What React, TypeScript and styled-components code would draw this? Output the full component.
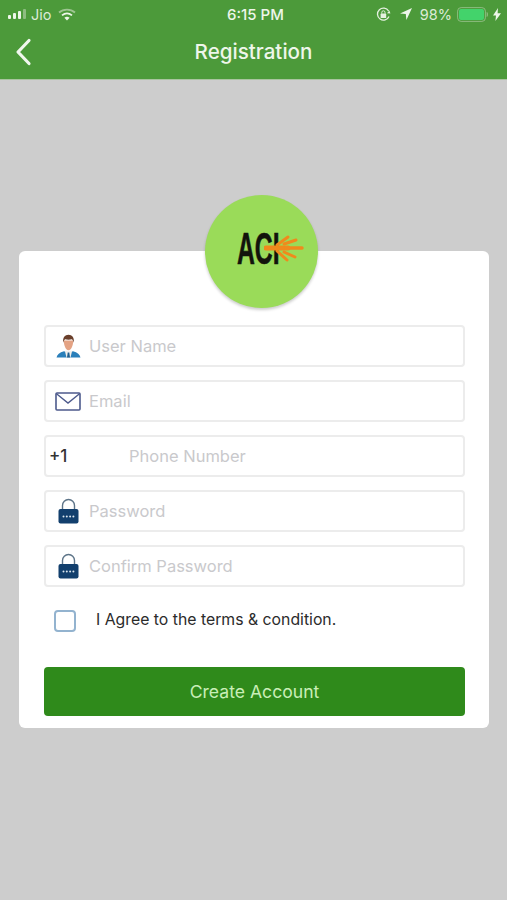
import { FC } from 'react';
import styled, { createGlobalStyle } from 'styled-components';

const GlobalStyle = createGlobalStyle`
  html, body {
    margin: 0;
    padding: 0;
    background: #cdcdcd;
    font-family: Inter, "Liberation Sans", sans-serif;
  }
  * { box-sizing: border-box; }
`;

const Screen = styled.div`
  width: 507px;
  height: 900px;
  background: #cdcdcd;
  overflow: hidden;
`;

const Header = styled.header`
  height: 80px;
  background: #4c9a3a;
  border-bottom: 1px solid #a9c49f;
  color: #eef6ea;
`;

const StatusBar = styled.div`
  height: 28px;
  padding: 0 6px 0 8px;
  display: grid;
  grid-template-columns: 1fr auto 1fr;
  align-items: center;
  font-size: 14.5px;
  color: #dcebd6;
`;

const StatusLeft = styled.div`
  display: flex;
  align-items: center;
  gap: 3px;
`;

const StatusRight = styled.div`
  display: flex;
  align-items: center;
  justify-content: flex-end;
  gap: 5px;
`;

const Time = styled.span`
  margin-left: 2px;
  font-size: 15px;
  font-weight: 500;
  color: #eef6ea;
`;

const NavBar = styled.div`
  height: 51px;
  display: grid;
  grid-template-columns: 1fr auto 1fr;
  align-items: center;
  padding: 0 14px;
  margin-top: -2px;
`;

const Title = styled.h1`
  margin: 0;
  font-size: 20.6px;
  font-weight: 500;
  color: #eef6ea;
`;

const Main = styled.main`
  padding: 171px 18px 0 19px;
`;

const Card = styled.section`
  position: relative;
  background: #fff;
  border-radius: 6px;
  padding: 74px 24px 12px 25px;
`;

const LogoBadge = styled.div`
  position: absolute;
  top: -56px;
  left: 186px;
  width: 113px;
  height: 113px;
  border-radius: 50%;
  background: #9adb59;
  box-shadow: 0 2px 3px rgba(0, 0, 0, 0.2);
  display: flex;
  align-items: center;
  padding: 0 0 7px 32px;
`;

const LogoText = styled.span`
  font-family: "Liberation Sans", sans-serif;
  font-weight: 700;
  font-size: 45px;
  color: #12140c;
  display: inline-block;
  transform: scaleX(0.55);
  transform-origin: left center;
  line-height: 1;
  -webkit-text-stroke: 0.6px #12140c;
`;

const Sparks = styled.svg`
  position: absolute;
  left: 59px;
  top: 34px;
`;

const Fields = styled.div`
  display: flex;
  flex-direction: column;
  gap: 13px;
`;

const Field = styled.div`
  height: 42px;
  border: 2px solid #ececec;
  border-radius: 4px;
  display: flex;
  align-items: center;
  background: #fff;
`;

const IconSlot = styled.span`
  width: 43px;
  flex: none;
  display: flex;
  align-items: center;
  justify-content: center;
  padding-left: 1px;
`;

const Placeholder = styled.span`
  font-size: 16.5px;
  color: #c9c9cc;
`;

const DialCode = styled.span`
  width: 83px;
  flex: none;
  padding-left: 3px;
  font-size: 17px;
  font-weight: 500;
  color: #333;
`;

const AgreeRow = styled.label`
  display: flex;
  align-items: center;
  height: 22px;
  margin-top: 23px;
  padding-left: 10px;
  gap: 20px;
  font-size: 15.8px;
  color: #2b2b2b;
`;

const AgreeText = styled.span`
  margin-top: -3px;
`;

const CheckBox = styled.span`
  width: 22px;
  height: 22px;
  border: 2px solid #93b3cf;
  border-radius: 4px;
  background: #fff;
  flex: none;
`;

const SubmitButton = styled.button`
  display: block;
  width: 100%;
  height: 49px;
  margin-top: 35px;
  border: none;
  border-radius: 4px;
  background: #2f8a1b;
  color: #c9eeb8;
  font-family: inherit;
  font-size: 17.6px;
  font-weight: 400;
`;

const SignalIcon: FC = () => (
  <svg width="20" height="12" viewBox="0 0 20 12">
    <rect x="0" y="7" width="3" height="4" rx="1" fill="#eef6ea" />
    <rect x="5" y="5" width="3" height="6" rx="1" fill="#eef6ea" />
    <rect x="10" y="3" width="3" height="8" rx="1" fill="#eef6ea" />
    <rect x="15" y="1" width="3" height="10" rx="1" fill="#8dbc80" />
  </svg>
);

const WifiIcon: FC = () => (
  <svg width="18" height="13" viewBox="0 0 18 13" style={{ marginLeft: 4 }}>
    <path d="M1 4.500C5.500.6 12.500.6 17 4.500" fill="none" stroke="#9ec592" strokeWidth="1.800" />
    <path d="M4 7.400c3-2.500 7-2.500 10 0" fill="none" stroke="#eef6ea" strokeWidth="1.800" />
    <path d="M9 12.500 6.400 9.700c1.600-1.200 3.600-1.200 5.200 0z" fill="#eef6ea" />
  </svg>
);

const RotationLockIcon: FC = () => (
  <svg width="15" height="15" viewBox="0 0 15 15">
    <path d="M13 9.500A6 6 0 1 1 12.600 4" fill="none" stroke="#e6f1e1" strokeWidth="1.300" />
    <path d="M14.400 6.400 11 6.200l2.400-2.800z" fill="#e6f1e1" />
    <rect x="4.600" y="6.600" width="5.600" height="4.400" rx=".6" fill="#e6f1e1" />
    <path d="M5.800 6.600V5.400a1.600 1.600 0 0 1 3.200 0v1.200" fill="none" stroke="#e6f1e1" strokeWidth="1" />
  </svg>
);

const LocationIcon: FC = () => (
  <svg width="12" height="12" viewBox="0 0 12 12" style={{ margin: '0 3px 0 4px' }}>
    <path d="M12 0 0 5.400l5.800.6.6 6z" fill="#eef6ea" />
  </svg>
);

const BatteryIcon: FC = () => (
  <svg width="31" height="15" viewBox="0 0 31 15">
    <rect x=".6" y=".6" width="27.800" height="13.800" rx="3.500" fill="none" stroke="#8dbc80" strokeWidth="1" />
    <rect x="2" y="2" width="25" height="11" rx="2" fill="#43d36b" />
    <path d="M29.600 5v5c1-.3 1.400-1.200 1.400-2.500S30.600 5.300 29.600 5z" fill="#8dbc80" />
  </svg>
);

const BoltIcon: FC = () => (
  <svg width="8" height="13" viewBox="0 0 8 13">
    <path d="M5 0 0 7.400h3L2.400 13 8 5.200H4.600z" fill="#eef6ea" />
  </svg>
);

const BackIcon: FC = () => (
  <svg width="20" height="28" viewBox="0 0 20 28">
    <path d="M15 2.500 4 14l11 11.500" fill="none" stroke="#f1f7ee" strokeWidth="3.200" strokeLinecap="round" strokeLinejoin="round" />
  </svg>
);

const UserIcon: FC = () => (
  <svg width="25" height="24" viewBox="0 0 25 24">
    <path d="M.5 23.500c.6-3.200 3-5 7.500-6.300l4.500 1.500 4.500-1.500c4.500 1.300 6.900 3.100 7.500 6.300z" fill="#2a7fba" />
    <path d="M8.800 16.800h7.400l-1.700 6.700h-4z" fill="#f1efec" />
    <path d="M11.700 18.500h1.600l.7 5h-3z" fill="#1f5f8f" />
    <path d="M7.800 6.500c0 5 2 9.800 4.700 9.800s4.700-4.800 4.700-9.800z" fill="#e4a384" />
    <path d="M7.400 8.800C6.300 3.500 9 .8 12.500.8s6.200 2.700 5.100 8c-.3-2-.9-3-1.700-3.500-2 .6-4.800.6-6.800 0-.8.500-1.400 1.500-1.700 3.500z" fill="#6a3f2b" />
  </svg>
);

const MailIcon: FC = () => (
  <svg width="26" height="19" viewBox="0 0 26 19">
    <rect x="1" y="1" width="24" height="17" rx="1" fill="none" stroke="#4d5a8c" strokeWidth="1.600" />
    <path d="M1.500 1.800 13 11 24.500 1.800" fill="none" stroke="#4d5a8c" strokeWidth="1.400" />
  </svg>
);

const LockIcon: FC = () => (
  <svg width="21" height="26" viewBox="0 0 21 26">
    <path d="M4.500 11V7.500a6 6 0 0 1 12 0V11" fill="none" stroke="#5d7488" strokeWidth="1.400" />
    <rect x=".5" y="11" width="20" height="14.500" rx="2" fill="#123f6d" />
    <g fill="#dbe6ee">
      <circle cx="5.500" cy="18.500" r="1" />
      <circle cx="8.800" cy="18.500" r="1" />
      <circle cx="12.100" cy="18.500" r="1" />
      <circle cx="15.400" cy="18.500" r="1" />
    </g>
  </svg>
);

export default function App() {
  return (
    <Screen>
      <GlobalStyle />
      <Header>
        <StatusBar>
          <StatusLeft>
            <SignalIcon />
            <span>Jio</span>
            <WifiIcon />
          </StatusLeft>
          <Time>6:15 PM</Time>
          <StatusRight>
            <RotationLockIcon />
            <LocationIcon />
            <span>98%</span>
            <BatteryIcon />
            <BoltIcon />
          </StatusRight>
        </StatusBar>
        <NavBar>
          <BackIcon />
          <Title>Registration</Title>
        </NavBar>
      </Header>
      <Main>
        <Card>
          <LogoBadge>
            <LogoText>ACI</LogoText>
            <Sparks width="44" height="40" viewBox="0 0 44 40">
              <g stroke="#f08a1c" strokeLinecap="round" fill="none">
                <path d="M2 19H24" strokeWidth="5" />
                <path d="M22 19H38" strokeWidth="3.400" />
                <path d="M13 16 24 8" strokeWidth="3" />
                <path d="M20 15 32 11" strokeWidth="3" />
                <path d="M13 22 23 31" strokeWidth="3" />
                <path d="M20 23 31 28" strokeWidth="3" />
              </g>
            </Sparks>
          </LogoBadge>
          <Fields>
            <Field>
              <IconSlot><UserIcon /></IconSlot>
              <Placeholder>User Name</Placeholder>
            </Field>
            <Field>
              <IconSlot><MailIcon /></IconSlot>
              <Placeholder>Email</Placeholder>
            </Field>
            <Field>
              <DialCode>+1</DialCode>
              <Placeholder>Phone Number</Placeholder>
            </Field>
            <Field>
              <IconSlot><LockIcon /></IconSlot>
              <Placeholder>Password</Placeholder>
            </Field>
            <Field>
              <IconSlot><LockIcon /></IconSlot>
              <Placeholder>Confirm Password</Placeholder>
            </Field>
          </Fields>
          <AgreeRow>
            <CheckBox />
            <AgreeText>I Agree to the terms &amp; condition.</AgreeText>
          </AgreeRow>
          <SubmitButton>Create Account</SubmitButton>
        </Card>
      </Main>
    </Screen>
  );
}
